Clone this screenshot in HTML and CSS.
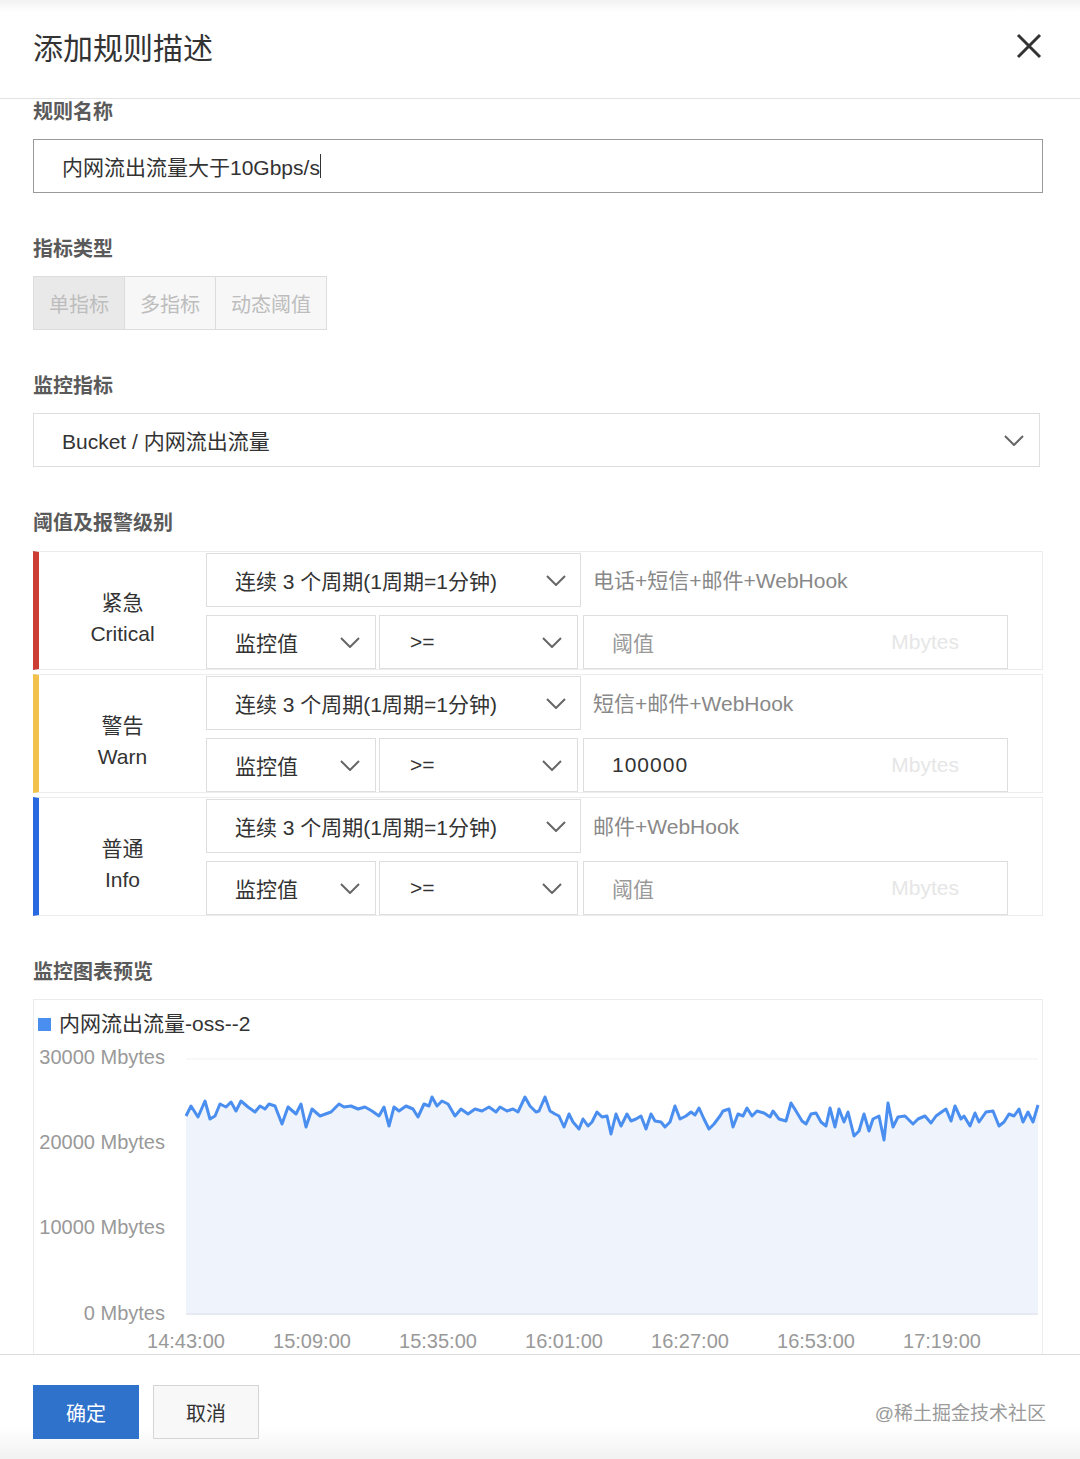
FILE: index.html
```html
<!DOCTYPE html>
<html lang="zh-CN">
<head>
    <meta charset="UTF-8">
    <title>添加规则描述</title>
    <link rel="stylesheet" href="styles.css">
</head>
<body>
    <div class="dialog">
        <div class="dialog-header">
            <h1 class="dialog-title">添加规则描述</h1>
            <svg class="close" width="26" height="26" viewBox="0 0 26 26">
                <path d="M2 2 L24 24 M24 2 L2 24" stroke="#333" stroke-width="3" fill="none"/>
            </svg>
        </div>

        <div class="dialog-body">
            <div class="field">
                <div class="field-label">规则名称</div>
                <div class="text-box">内网流出流量大于10Gbps/s<span class="caret"></span></div>
            </div>

            <div class="field">
                <div class="field-label">指标类型</div>
                <div class="segments">
                    <div class="segment active">单指标</div>
                    <div class="segment">多指标</div>
                    <div class="segment">动态阈值</div>
                </div>
            </div>

            <div class="field">
                <div class="field-label">监控指标</div>
                <div class="select select-main">
                    <span>Bucket / 内网流出流量</span>
                    <svg class="chevron" width="20" height="11" viewBox="0 0 20 11"><path d="M1 1 L10 10 L19 1" stroke="#666" stroke-width="2" fill="none"/></svg>
                </div>
            </div>

            <div class="field">
                <div class="field-label">阈值及报警级别</div>
                <div class="levels">
                    <div class="level level-critical">
                        <div class="level-name"><span>紧急</span><span>Critical</span></div>
                        <div class="level-body">
                            <div class="level-line">
                                <div class="select select-period">
                                    <span>连续 3 个周期(1周期=1分钟)</span>
                                    <svg class="chevron" width="20" height="11" viewBox="0 0 20 11"><path d="M1 1 L10 10 L19 1" stroke="#666" stroke-width="2" fill="none"/></svg>
                                </div>
                                <div class="notify">电话+短信+邮件+WebHook</div>
                            </div>
                            <div class="level-line">
                                <div class="select select-metric">
                                    <span>监控值</span>
                                    <svg class="chevron" width="20" height="11" viewBox="0 0 20 11"><path d="M1 1 L10 10 L19 1" stroke="#666" stroke-width="2" fill="none"/></svg>
                                </div>
                                <div class="select select-op">
                                    <span>&gt;=</span>
                                    <svg class="chevron" width="20" height="11" viewBox="0 0 20 11"><path d="M1 1 L10 10 L19 1" stroke="#666" stroke-width="2" fill="none"/></svg>
                                </div>
                                <div class="threshold">
                                    <span class="placeholder">阈值</span>
                                    <span class="unit">Mbytes</span>
                                </div>
                            </div>
                        </div>
                    </div>

                    <div class="level level-warn">
                        <div class="level-name"><span>警告</span><span>Warn</span></div>
                        <div class="level-body">
                            <div class="level-line">
                                <div class="select select-period">
                                    <span>连续 3 个周期(1周期=1分钟)</span>
                                    <svg class="chevron" width="20" height="11" viewBox="0 0 20 11"><path d="M1 1 L10 10 L19 1" stroke="#666" stroke-width="2" fill="none"/></svg>
                                </div>
                                <div class="notify">短信+邮件+WebHook</div>
                            </div>
                            <div class="level-line">
                                <div class="select select-metric">
                                    <span>监控值</span>
                                    <svg class="chevron" width="20" height="11" viewBox="0 0 20 11"><path d="M1 1 L10 10 L19 1" stroke="#666" stroke-width="2" fill="none"/></svg>
                                </div>
                                <div class="select select-op">
                                    <span>&gt;=</span>
                                    <svg class="chevron" width="20" height="11" viewBox="0 0 20 11"><path d="M1 1 L10 10 L19 1" stroke="#666" stroke-width="2" fill="none"/></svg>
                                </div>
                                <div class="threshold">
                                    <span class="value">100000</span>
                                    <span class="unit">Mbytes</span>
                                </div>
                            </div>
                        </div>
                    </div>

                    <div class="level level-info">
                        <div class="level-name"><span>普通</span><span>Info</span></div>
                        <div class="level-body">
                            <div class="level-line">
                                <div class="select select-period">
                                    <span>连续 3 个周期(1周期=1分钟)</span>
                                    <svg class="chevron" width="20" height="11" viewBox="0 0 20 11"><path d="M1 1 L10 10 L19 1" stroke="#666" stroke-width="2" fill="none"/></svg>
                                </div>
                                <div class="notify">邮件+WebHook</div>
                            </div>
                            <div class="level-line">
                                <div class="select select-metric">
                                    <span>监控值</span>
                                    <svg class="chevron" width="20" height="11" viewBox="0 0 20 11"><path d="M1 1 L10 10 L19 1" stroke="#666" stroke-width="2" fill="none"/></svg>
                                </div>
                                <div class="select select-op">
                                    <span>&gt;=</span>
                                    <svg class="chevron" width="20" height="11" viewBox="0 0 20 11"><path d="M1 1 L10 10 L19 1" stroke="#666" stroke-width="2" fill="none"/></svg>
                                </div>
                                <div class="threshold">
                                    <span class="placeholder">阈值</span>
                                    <span class="unit">Mbytes</span>
                                </div>
                            </div>
                        </div>
                    </div>
                </div>
            </div>

            <div class="field">
                <div class="field-label">监控图表预览</div>
                <div class="chart">
                    <div class="legend"><i class="legend-dot"></i>内网流出流量-oss--2</div>
                    <svg class="chart-plot" width="1008" height="340" viewBox="34 1039 1008 340">
                        <g class="grid">
                            <line x1="186" y1="1060" x2="1038" y2="1060"/>
                            <line x1="186" y1="1145" x2="1038" y2="1145"/>
                            <line x1="186" y1="1230" x2="1038" y2="1230"/>
                        </g>
                        <polygon class="area" points="186,1315 186,1117 191,1107 198,1118 205,1102 210,1120 215,1117 220,1105 226,1108 231,1103 236,1112 241,1102 248,1108 255,1113 260,1107 265,1110 269,1105 275,1107 282,1125 288,1108 296,1115 301,1105 306,1128 312,1110 320,1117 331,1113 339,1105 344,1108 351,1107 358,1110 365,1108 372,1112 379,1117 384,1108 389,1127 394,1108 399,1112 406,1107 413,1110 418,1118 424,1105 429,1107 432,1098 437,1107 442,1102 448,1105 455,1117 461,1110 468,1115 475,1110 482,1112 489,1108 496,1113 500,1108 507,1112 513,1110 518,1113 525,1098 530,1107 536,1113 539,1112 545,1098 550,1112 555,1115 559,1117 564,1128 569,1115 573,1123 579,1130 583,1120 588,1127 592,1123 597,1113 602,1118 607,1117 611,1135 616,1115 621,1127 627,1115 631,1122 636,1120 641,1117 646,1130 651,1115 655,1122 661,1123 665,1128 670,1123 675,1107 680,1120 686,1117 691,1113 695,1116 699,1109 704,1120 709,1130 714,1125 720,1117 723,1112 729,1110 733,1128 738,1115 743,1117 747,1109 752,1117 757,1112 764,1114 770,1118 773,1112 779,1120 786,1122 791,1104 796,1112 802,1122 806,1125 811,1115 816,1114 821,1123 826,1127 830,1109 835,1128 839,1110 844,1123 848,1113 854,1137 859,1132 864,1115 869,1132 873,1120 879,1117 884,1141 888,1104 893,1128 898,1118 905,1117 913,1125 918,1120 925,1117 931,1124 936,1117 943,1112 946,1110 951,1122 955,1107 961,1120 964,1117 970,1127 975,1114 979,1123 986,1113 993,1112 999,1127 1004,1123 1009,1115 1014,1117 1019,1110 1023,1123 1028,1113 1033,1123 1038,1106 1038,1315"/>
                        <polyline class="line" points="186,1117 191,1107 198,1118 205,1102 210,1120 215,1117 220,1105 226,1108 231,1103 236,1112 241,1102 248,1108 255,1113 260,1107 265,1110 269,1105 275,1107 282,1125 288,1108 296,1115 301,1105 306,1128 312,1110 320,1117 331,1113 339,1105 344,1108 351,1107 358,1110 365,1108 372,1112 379,1117 384,1108 389,1127 394,1108 399,1112 406,1107 413,1110 418,1118 424,1105 429,1107 432,1098 437,1107 442,1102 448,1105 455,1117 461,1110 468,1115 475,1110 482,1112 489,1108 496,1113 500,1108 507,1112 513,1110 518,1113 525,1098 530,1107 536,1113 539,1112 545,1098 550,1112 555,1115 559,1117 564,1128 569,1115 573,1123 579,1130 583,1120 588,1127 592,1123 597,1113 602,1118 607,1117 611,1135 616,1115 621,1127 627,1115 631,1122 636,1120 641,1117 646,1130 651,1115 655,1122 661,1123 665,1128 670,1123 675,1107 680,1120 686,1117 691,1113 695,1116 699,1109 704,1120 709,1130 714,1125 720,1117 723,1112 729,1110 733,1128 738,1115 743,1117 747,1109 752,1117 757,1112 764,1114 770,1118 773,1112 779,1120 786,1122 791,1104 796,1112 802,1122 806,1125 811,1115 816,1114 821,1123 826,1127 830,1109 835,1128 839,1110 844,1123 848,1113 854,1137 859,1132 864,1115 869,1132 873,1120 879,1117 884,1141 888,1104 893,1128 898,1118 905,1117 913,1125 918,1120 925,1117 931,1124 936,1117 943,1112 946,1110 951,1122 955,1107 961,1120 964,1117 970,1127 975,1114 979,1123 986,1113 993,1112 999,1127 1004,1123 1009,1115 1014,1117 1019,1110 1023,1123 1028,1113 1033,1123 1038,1106"/>
                        <line class="baseline" x1="186" y1="1315" x2="1038" y2="1315"/>
                        <g class="y-labels">
                            <text x="165" y="1065">30000 Mbytes</text>
                            <text x="165" y="1150">20000 Mbytes</text>
                            <text x="165" y="1235">10000 Mbytes</text>
                            <text x="165" y="1321">0 Mbytes</text>
                        </g>
                        <g class="x-labels">
                            <text x="186" y="1349">14:43:00</text>
                            <text x="312" y="1349">15:09:00</text>
                            <text x="438" y="1349">15:35:00</text>
                            <text x="564" y="1349">16:01:00</text>
                            <text x="690" y="1349">16:27:00</text>
                            <text x="816" y="1349">16:53:00</text>
                            <text x="942" y="1349">17:19:00</text>
                        </g>
                    </svg>
                </div>
            </div>
        </div>

        <div class="dialog-footer">
            <button class="btn btn-primary">确定</button>
            <button class="btn">取消</button>
            <span class="watermark">@稀土掘金技术社区</span>
        </div>
    </div>
</body>
</html>
```

FILE: styles.css
```css
body {
    margin: 0;
    background: #fff;
    font-family: "Liberation Sans", "Noto Sans CJK SC", sans-serif;
    color: #333;
}
.dialog {
    height: 1459px;
    display: flex;
    flex-direction: column;
    overflow: hidden;
}
.dialog-header {
    height: 99px;
    flex-shrink: 0;
    box-sizing: border-box;
    display: flex;
    align-items: center;
    justify-content: space-between;
    padding: 0 37px 6px 33px;
    border-bottom: 1px solid #e3e3e3;
    background: linear-gradient(to bottom, #f2f2f2 0, #fff 12px);
}
.dialog-title {
    margin: 0;
    font-size: 30px;
    font-weight: normal;
    color: #333;
}
.close {
    margin-right: 1px;
}
.dialog-body {
    flex: 1;
    overflow: hidden;
    padding: 0 37px 0 33px;
}
.field {
    margin-bottom: 43px;
}
.field-label {
    font-size: 20px;
    line-height: 26px;
    font-weight: bold;
    color: #5a5a5a;
    margin-bottom: 14px;
}
.text-box {
    height: 54px;
    box-sizing: border-box;
    border: 1px solid #999;
    padding: 0 28px;
    display: flex;
    align-items: center;
    font-size: 21px;
    color: #333;
}
.caret {
    display: inline-block;
    width: 1px;
    height: 24px;
    background: #333;
}
.segments {
    display: flex;
}
.segment {
    height: 54px;
    box-sizing: border-box;
    border: 1px solid #dcdcdc;
    margin-left: -1px;
    padding: 0 15px;
    display: flex;
    align-items: center;
    font-size: 20px;
    color: #bdbdbd;
    background: #f7f7f7;
}
.segment:first-child {
    margin-left: 0;
}
.segment.active {
    background: #e9e9e9;
}
.select {
    height: 54px;
    box-sizing: border-box;
    border: 1px solid #dedede;
    background: #fff;
    display: flex;
    align-items: center;
    justify-content: space-between;
    padding: 0 15px 0 28px;
    font-size: 21px;
    color: #333;
}
.select-main {
    margin-right: 3px;
}
.levels {
    padding-top: 1px;
}
.level {
    height: 119px;
    box-sizing: border-box;
    display: flex;
    border: 1px solid #ececec;
    border-left: 6px solid #cc3d33;
}
.level + .level {
    margin-top: 4px;
}
.level-warn {
    border-left-color: #f2c14c;
}
.level-info {
    border-left-color: #2a6ae0;
}
.level-name {
    width: 167px;
    flex-shrink: 0;
    box-sizing: border-box;
    padding-top: 14px;
    display: flex;
    flex-direction: column;
    align-items: center;
    justify-content: center;
    font-size: 21px;
    line-height: 31px;
    color: #333;
}
.level-body {
    flex: 1;
    display: flex;
    flex-direction: column;
    gap: 8px;
    padding-top: 1px;
}
.level-line {
    display: flex;
    align-items: center;
}
.select-period {
    width: 375px;
    padding-right: 14px;
}
.select-metric {
    width: 170px;
    padding-right: 15px;
}
.select-op {
    width: 199px;
    margin-left: 3px;
    padding-left: 30px;
    padding-right: 15px;
}
.notify {
    padding-left: 12px;
    font-size: 21px;
    color: #888;
    margin-top: -2px;
}
.threshold {
    width: 425px;
    height: 54px;
    box-sizing: border-box;
    margin-left: 5px;
    border: 1px solid #dedede;
    display: flex;
    align-items: center;
    justify-content: space-between;
    padding: 0 48px 0 28px;
    font-size: 21px;
}
.placeholder {
    color: #999;
}
.value {
    color: #333;
    letter-spacing: 1px;
}
.unit {
    color: #e6e6e6;
}
.chart {
    height: 400px;
    border: 1px solid #ececec;
}
.legend {
    height: 38px;
    box-sizing: border-box;
    padding: 10px 0 0 4px;
    display: flex;
    align-items: center;
    font-size: 21px;
    line-height: 28px;
    color: #333;
}
.legend-dot {
    width: 13px;
    height: 13px;
    background: #4a8ff0;
    margin-right: 8px;
}
.chart-plot {
    display: block;
}
.grid line {
    stroke: #f1f1f1;
    stroke-width: 1;
}
.area {
    fill: #eef3fc;
}
.line {
    fill: none;
    stroke: #4a8ff0;
    stroke-width: 3;
    stroke-linejoin: round;
}
.baseline {
    stroke: #e4e9f2;
    stroke-width: 2;
}
.y-labels text {
    font-size: 20px;
    fill: #999;
    text-anchor: end;
}
.x-labels text {
    font-size: 20px;
    fill: #999;
    text-anchor: middle;
}
.dialog-footer {
    height: 105px;
    flex-shrink: 0;
    box-sizing: border-box;
    border-top: 1px solid #dcdcdc;
    display: flex;
    align-items: flex-start;
    gap: 14px;
    padding: 30px 34px 0 33px;
    background: linear-gradient(to bottom, #fff 70%, #f1f1f1 100%);
}
.btn {
    width: 106px;
    height: 54px;
    font-family: inherit;
    font-size: 20px;
    color: #333;
    background: #f8f8f8;
    border: 1px solid #d5d5d5;
    border-radius: 0;
    cursor: pointer;
}
.btn-primary {
    color: #fff;
    background: #2f72cb;
    border-color: #2f72cb;
}
.watermark {
    margin-left: auto;
    align-self: center;
    margin-top: -22px;
    font-size: 19px;
    color: #9a9a9a;
}
```
